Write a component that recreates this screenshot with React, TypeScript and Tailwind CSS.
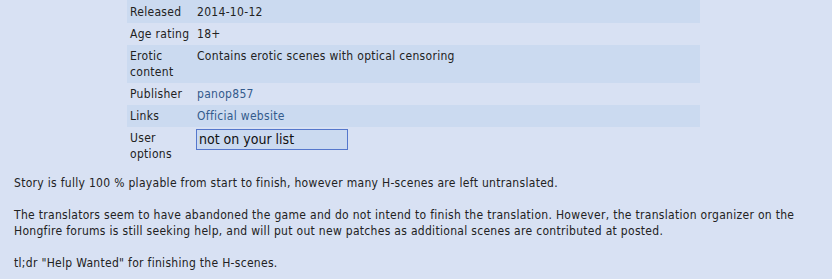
import React from 'react';

const rows: { label: string; value: React.ReactNode; stripe: boolean }[] = [
  { label: 'Released', value: '2014-10-12', stripe: true },
  { label: 'Age rating', value: '18+', stripe: false },
  { label: 'Erotic content', value: 'Contains erotic scenes with optical censoring', stripe: true },
  { label: 'Publisher', value: <a href="#" className="text-[#335a8c]">panop857</a>, stripe: false },
  { label: 'Links', value: <a href="#" className="text-[#335a8c]">Official website</a>, stripe: true },
];

export default function App() {
  return (
    <div className="min-h-[279px] bg-[#d8e1f3] text-[#222] text-[12px] leading-4 tracking-[0.3px] font-['DejaVu_Sans_Condensed','DejaVu_Sans',sans-serif]">
      <table className="ml-[127px] w-[573px] border-collapse">
        <tbody>
          {rows.map((r, i) => (
            <tr key={r.label} className={r.stripe ? 'bg-[#cbdaf0]' : ''}>
              <td className={`w-[67px] px-[3px] pb-[3px] align-top ${i === 0 ? 'pt-[4px]' : 'pt-[3px]'}`}>{r.label}</td>
              <td className={`px-[3px] pb-[3px] align-top ${i === 0 ? 'pt-[4px]' : 'pt-[3px]'}`}>{r.value}</td>
            </tr>
          ))}
          <tr>
            <td className="w-[67px] px-[3px] pt-[3px] pb-[5px] align-top">User options</td>
            <td className="pl-[2px] pr-[3px] pt-[2px] align-top">
              <div className="w-[152px] h-[21px] border border-[#5577cc] bg-[#cbdaf0] px-[2px] text-[14px] leading-[19px] tracking-normal text-[#111]">
                not on your list
              </div>
            </td>
          </tr>
        </tbody>
      </table>
      <div className="pl-[14px] pr-[10px] pt-[8px]">
        <p>Story is fully 100 % playable from start to finish, however many H-scenes are left untranslated.</p>
        <br />
        <p>
          The translators seem to have abandoned the game and do not intend to finish the translation. However, the
          translation organizer on the Hongfire forums is still seeking help, and will put out new patches as additional
          scenes are contributed at posted.
        </p>
        <br />
        <p>tl;dr "Help Wanted" for finishing the H-scenes.</p>
      </div>
    </div>
  );
}
